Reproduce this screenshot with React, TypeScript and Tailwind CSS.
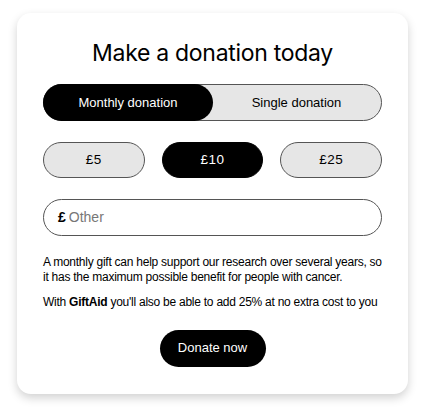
import { useState } from 'react';

const amounts = [5, 10, 25];

export default function App() {
  const [monthly, setMonthly] = useState(true);
  const [amount, setAmount] = useState(10);

  return (
    <div className="min-h-screen w-[421px] bg-white pt-[13px] pl-[17px] font-['Liberation_Sans',Arial,sans-serif] text-black">
      <div className="w-[391px] h-[381px] rounded-[14px] bg-white shadow-[0_4px_10px_rgba(0,0,0,0.18)] px-[26px] pt-[26px]">
        <h1 className="text-center text-[23px] leading-[28px] font-['Inter',sans-serif] font-normal tracking-[-0.3px]">
          Make a donation today
        </h1>

        {/* Frequency toggle */}
        <div className="mt-[17px] flex h-[37px] rounded-full border border-[#555] bg-[#e6e6e6] text-[13px]">
          <button
            onClick={() => setMonthly(true)}
            className={`w-[170px] -m-px rounded-full ${monthly ? 'bg-black text-white' : 'text-black'}`}
          >
            Monthly donation
          </button>
          <button
            onClick={() => setMonthly(false)}
            className={`flex-1 -m-px rounded-full ${!monthly ? 'bg-black text-white' : 'text-black'}`}
          >
            Single donation
          </button>
        </div>

        {/* Amounts */}
        <div className="mt-[21px] grid grid-cols-3 gap-[17px]">
          {amounts.map((a) => (
            <button
              key={a}
              onClick={() => setAmount(a)}
              className={`h-[36px] rounded-full border text-[13.5px] tracking-[0.5px] ${
                amount === a ? 'bg-black border-black text-white' : 'bg-[#e6e6e6] border-[#555] text-black'
              }`}
            >
              £{a}
            </button>
          ))}
        </div>

        <div className="mt-[21px] flex h-[37px] items-center rounded-full border border-[#555] px-[14px] text-[14px]">
          <span className="font-bold mr-[3px]">£</span>
          <input
            placeholder="Other"
            className="flex-1 bg-transparent outline-none placeholder:text-[#777]"
          />
        </div>

        <div className="-mr-[4px] text-[12px] leading-[14.5px] tracking-[-0.25px]">
          <p className="mt-[19px]">
            A monthly gift can help support our research over several years, so it has the maximum possible benefit for people with cancer.
          </p>
          <p className="mt-[11px]">
            With <b>GiftAid</b> you'll also be able to add 25% at no extra cost to you
          </p>
        </div>

        <div className="mt-[20px] flex justify-center">
          <button className="h-[37px] w-[106px] rounded-full bg-black text-white text-[13px]">
            Donate now
          </button>
        </div>
      </div>
    </div>
  );
}
